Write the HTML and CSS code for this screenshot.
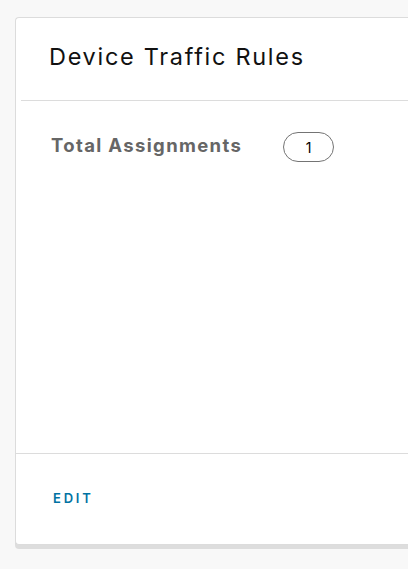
FILE: index.html
```html
<!DOCTYPE html>
<html>
<head>
<meta charset="utf-8">
<link rel="stylesheet" href="styles.css">
</head>
<body>
<div class="card">
  <div class="card-header">Device Traffic Rules</div>
  <div class="card-block">
    <div class="stat">
      <span class="stat-label">Total Assignments</span>
      <span class="badge">1</span>
    </div>
  </div>
  <div class="card-footer">
    <a class="btn-link">EDIT</a>
  </div>
</div>
</body>
</html>
```
FILE: styles.css
```css
html, body {
  margin: 0;
  padding: 0;
  background: #f8f8f8;
  overflow: hidden;
  height: 100%;
}
body {
  font-family: Inter, "Noto Sans", sans-serif;
}
.card {
  margin: 17px 0 0 15px;
  width: calc(100% - 15px);
  height: 528px;
  background: #fff;
  border: 1px solid #dcdcdc;
  border-right: none;
  border-radius: 4px 0 0 4px;
  box-shadow: 0 4px 0 #dddddd;
  display: flex;
  flex-direction: column;
  box-sizing: border-box;
}
.card-header {
  height: 83px;
  margin-left: 5px;
  border-bottom: 1px solid #dcdcdc;
  box-sizing: border-box;
  padding: 24px 0 0 28px;
  font-size: 23.5px;
  font-weight: 400;
  letter-spacing: 1.7px;
  color: #111;
  line-height: 30px;
}
.card-block {
  flex: 1;
  padding: 31px 0 0 35px;
}
.stat {
  display: flex;
  align-items: flex-start;
  gap: 41px;
}
.stat-label {
  margin-top: 1px;
  font-size: 18.5px;
  font-weight: 700;
  letter-spacing: 1.35px;
  color: #666;
  line-height: 24px;
}
.badge {
  width: 51px;
  height: 30px;
  box-sizing: border-box;
  border: 1.5px solid #747474;
  border-radius: 15px;
  display: flex;
  align-items: center;
  justify-content: center;
  font-size: 14px;
  color: #000;
}
.card-footer {
  height: 91px;
  border-top: 1px solid #dcdcdc;
  box-sizing: border-box;
  padding: 33px 0 0 37px;
}
.btn-link {
  font-size: 13px;
  font-weight: 600;
  letter-spacing: 2.8px;
  color: #0072a3;
  line-height: 16px;
}
```
